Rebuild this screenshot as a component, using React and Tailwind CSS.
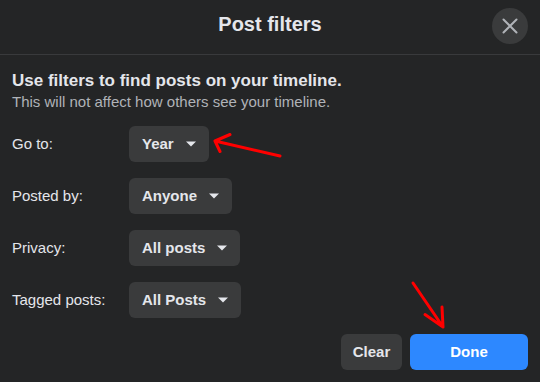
import React from "react";

function Caret() {
  return (
    <svg width="10" height="6" viewBox="0 0 10 6" className="ml-3 shrink-0">
      <path d="M0 0.5 L10 0.5 L5 5.5 Z" fill="#e4e6eb" />
    </svg>
  );
}

function Row({ label, value }) {
  return (
    <div className="flex items-center">
      <div className="w-[117px] text-[15px] text-[#e4e6eb]">{label}</div>
      <div className="flex h-9 items-center rounded-md bg-[#3a3b3c] pl-[13px] pr-[13px] text-[15px] font-bold text-[#e4e6eb]">
        <span>{value}</span>
        <Caret />
      </div>
    </div>
  );
}

export default function App() {
  return (
    <div
      className="relative h-[382px] w-[540px] overflow-hidden bg-[#242526]"
      style={{ fontFamily: '"Liberation Sans", Arial, sans-serif' }}
    >
      <div className="grid h-[55px] grid-cols-[1fr_auto_1fr] items-start border-b border-[#393a3c]">
        <div />
        <div className="mt-3 text-[20px] font-bold leading-6 text-[#e4e6eb]">Post filters</div>
        <div className="flex justify-end pr-3 pt-2">
          <div className="flex h-9 w-9 items-center justify-center rounded-full bg-[#3a3b3c]">
            <svg width="18" height="18" viewBox="0 0 18 18">
              <path d="M2.5 2.5 L15.5 15.5 M15.5 2.5 L2.5 15.5" stroke="#b0b3b8" strokeWidth="2" strokeLinecap="round" />
            </svg>
          </div>
        </div>
      </div>
      <div className="px-3 pt-[14px]">
        <div className="text-[17px] font-bold leading-[23px] text-[#e4e6eb]">
          Use filters to find posts on your timeline.
        </div>
        <div className="text-[15px] leading-5 text-[#b0b3b8]">
          This will not affect how others see your timeline.
        </div>
        <div className="mt-[14px] flex flex-col gap-4">
          <Row label="Go to:" value="Year" />
          <Row label="Posted by:" value="Anyone" />
          <Row label="Privacy:" value="All posts" />
          <Row label="Tagged posts:" value="All Posts" />
        </div>
        <div className="mt-4 flex justify-end gap-2">
          <button className="h-9 w-[61px] rounded-md bg-[#3a3b3c] text-[15px] font-bold text-[#e4e6eb]">
            Clear
          </button>
          <button className="h-9 w-[118px] rounded-md bg-[#2d88ff] text-[15px] font-bold text-white">
            Done
          </button>
        </div>
      </div>
      <svg className="pointer-events-none absolute left-0 top-0" width="540" height="382">
        <g stroke="#f00" strokeWidth="3" strokeLinecap="round" strokeLinejoin="round" fill="none">
          <path d="M280 156 L215 141 M215 141 L230 134.5 M215 141 L220 151.5" />
          <path d="M413 283 L443 327 M443 327 L425 314.5 M443 327 L442 307" />
        </g>
      </svg>
    </div>
  );
}
